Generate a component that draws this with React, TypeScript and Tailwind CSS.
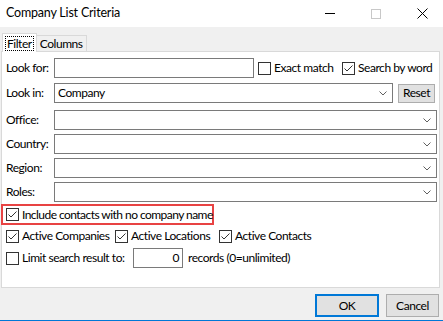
import React from "react";

const Check = ({ checked }: { checked?: boolean }) => (
  <span className="w-[13px] h-[13px] border border-[#333333] bg-white flex items-center justify-center shrink-0">
    {checked && (
      <svg width="11" height="11" viewBox="0 0 11 11">
        <polyline points="1.5,5.5 4,8 9.5,2.5" fill="none" stroke="#333333" strokeWidth="1" />
      </svg>
    )}
  </span>
);

const Chevron = () => (
  <svg width="8" height="5" viewBox="0 0 8 5" className="shrink-0">
    <polyline points="0.5,0.5 4,4 7.5,0.5" fill="none" stroke="#606060" strokeWidth="1" />
  </svg>
);

const Label = ({ children }: { children: React.ReactNode }) => (
  <span className="w-[48px] shrink-0">{children}</span>
);

export default function App() {
  return (
    <div
      className="w-[443px] h-[321px] bg-[#f0f0f0] flex flex-col text-[12px] tracking-[-0.45px] text-black leading-none overflow-hidden whitespace-nowrap"
      style={{ fontFamily: 'Lato, "Liberation Sans", sans-serif' }}
    >
      {/* Title bar */}
      <div className="h-[27px] bg-white flex items-center shrink-0">
        <span className="ml-[6px] text-[12.5px] tracking-[-0.2px]">Company List Criteria</span>
        <div className="ml-auto flex items-center h-full">
          <div className="w-[10px] h-px bg-black mr-[36px]" />
          <div className="w-[10px] h-[10px] border border-[#c8c8c8] mr-[36px]" />
          <svg width="11" height="11" viewBox="0 0 11 11" className="mr-[15px]">
            <line x1="0.5" y1="0.5" x2="10.5" y2="10.5" stroke="#000" strokeWidth="1" />
            <line x1="10.5" y1="0.5" x2="0.5" y2="10.5" stroke="#000" strokeWidth="1" />
          </svg>
        </div>
      </div>

      {/* Tabs */}
      <div className="flex items-end h-[24px] pl-[2px] shrink-0">
        <div className="relative z-10 h-[19px] mb-[-1px] px-[2px] pt-[2px] bg-white border border-b-0 border-[#d9d9d9] flex">
          <span className="h-[15px] px-[1px] border border-dotted border-black flex items-center">Filter</span>
        </div>
        <div className="h-[16px] bg-[#f0f0f0] border border-b-0 border-l-0 border-[#d9d9d9] px-[3px] flex items-center">
          Columns
        </div>
      </div>

      {/* Panel */}
      <div className="ml-[1px] w-[439px] h-[237px] bg-white border border-[#d9d9d9] flex flex-col shrink-0 pl-[4px]">
        {/* Look for */}
        <div className="mt-[6px] h-[20px] flex items-center">
          <Label>Look for:</Label>
          <div className="w-[200px] h-[20px] border border-[#7a7a7a] bg-white" />
          <div className="ml-[4px] w-[84px] flex items-center gap-[3px]">
            <Check />
            <span>Exact match</span>
          </div>
          <div className="flex items-center gap-[3px]">
            <Check checked />
            <span>Search by word</span>
          </div>
        </div>
        {/* Look in */}
        <div className="mt-[5px] h-[20px] flex items-center">
          <Label>Look in:</Label>
          <div className="w-[339px] h-[20px] border border-[#7a7a7a] bg-white flex items-center pl-[3px] pr-[5px]">
            <span>Company</span>
            <span className="ml-auto"><Chevron /></span>
          </div>
          <div className="ml-[5px] w-[37px] h-[19px] bg-[#e1e1e1] border border-[#adadad] flex items-center justify-center">
            Reset
          </div>
        </div>
        {/* Combos */}
        {["Office:", "Country:", "Region:", "Roles:"].map((l, i) => (
          <div key={l} className={i === 0 ? "mt-[7px] h-[20px] flex items-center" : "mt-[4px] h-[20px] flex items-center"}>
            <Label>{l}</Label>
            <div className="w-[383px] h-[20px] border border-[#7a7a7a] bg-white flex items-center pr-[5px]">
              <span className="ml-auto"><Chevron /></span>
            </div>
          </div>
        ))}
        {/* Include */}
        <div className="mt-[2px] ml-[-5px] w-[213px] h-[21px] border-2 border-[#e84343] flex items-center pl-[3px] gap-[3px]">
          <Check checked />
          <span className="tracking-[-0.55px]">Include contacts with no company name</span>
        </div>
        {/* Active row */}
        <div className="mt-[4px] h-[14px] flex items-center">
          <div className="w-[109px] flex items-center gap-[3px]">
            <Check checked />
            <span>Active Companies</span>
          </div>
          <div className="w-[104px] flex items-center gap-[3px]">
            <Check checked />
            <span>Active Locations</span>
          </div>
          <div className="flex items-center gap-[3px]">
            <Check checked />
            <span>Active Contacts</span>
          </div>
        </div>
        {/* Limit row */}
        <div className="mt-[5px] h-[20px] flex items-center">
          <div className="w-[127px] flex items-center gap-[3px]">
            <Check />
            <span>Limit search result to:</span>
          </div>
          <div className="w-[50px] h-[20px] border border-[#7a7a7a] bg-white flex items-center justify-end pr-[3px]">
            0
          </div>
          <span className="ml-[5px]">records (0=unlimited)</span>
        </div>
      </div>

      {/* Buttons */}
      <div className="flex justify-end mt-[6px] pr-[4px] gap-[7px] shrink-0">
        <div className="w-[64px] h-[23px] bg-[#e1e1e1] border-2 border-[#0078d7] flex items-center justify-center">
          OK
        </div>
        <div className="w-[53px] h-[23px] bg-[#e1e1e1] border border-[#adadad] flex items-center justify-center">
          Cancel
        </div>
      </div>
      <div className="mt-auto h-px bg-[#0078d7] shrink-0" />
    </div>
  );
}
